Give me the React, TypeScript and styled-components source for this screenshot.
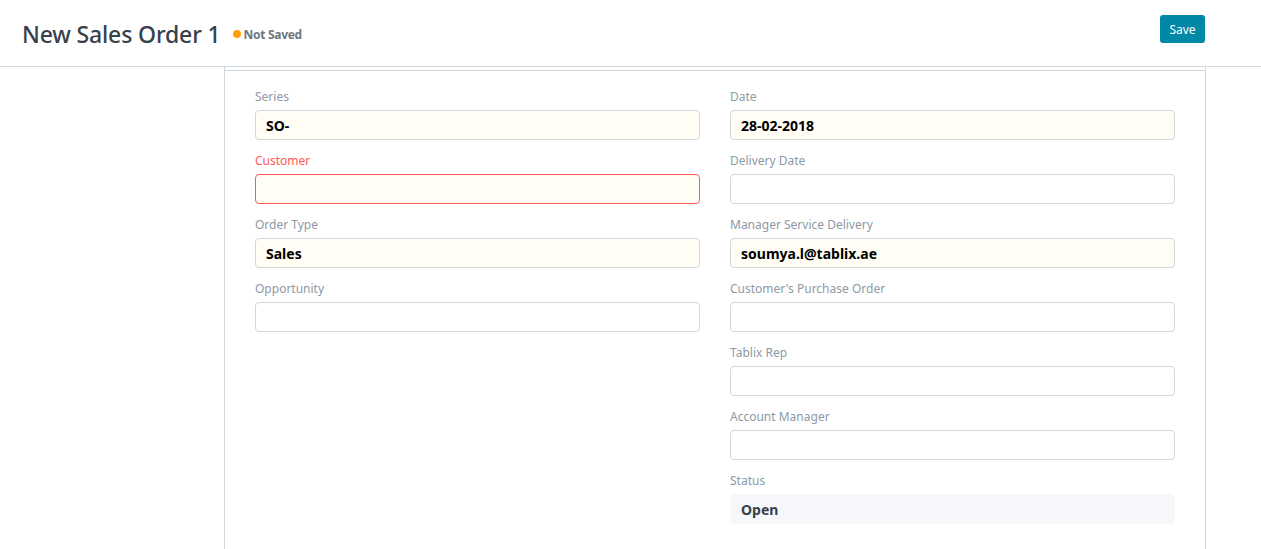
import React from "react";
import styled, { createGlobalStyle } from "styled-components";

const Global = createGlobalStyle`
  html, body { margin: 0; padding: 0; background: #fff; }
  body { font-family: "Noto Sans", "Open Sans", sans-serif; color: #36414c; }
  * { box-sizing: border-box; }
`;

const Page = styled.div`
  width: 1261px;
  height: 549px;
  overflow: hidden;
`;

const Header = styled.header`
  height: 67px;
  border-bottom: 1px solid #d1d8dd;
  display: flex;
  align-items: center;
  padding: 0 56px 0 22px;
`;

const Title = styled.h1`
  margin: 3px 0 0;
  font-size: 23px;
  font-weight: 500;
  color: #36414c;
  line-height: 1;
  letter-spacing: -0.15px;
`;

const Indicator = styled.span`
  display: inline-flex;
  align-items: center;
  margin-left: 12px;
  margin-top: 2px;
  font-size: 12px;
  font-weight: 700;
  letter-spacing: -0.3px;
  color: #6c7680;
  &::before {
    content: "";
    width: 8px;
    height: 8px;
    border-radius: 50%;
    background: #ffa00a;
    margin-right: 3px;
  }
`;

const Spacer = styled.div`
  flex: 1;
`;

const SaveButton = styled.button`
  height: 28px;
  width: 45px;
  padding: 0;
  border: none;
  border-radius: 3px;
  background: #0089a7;
  color: #fff;
  font-family: inherit;
  font-size: 12px;
  margin-top: -8px;
`;

const Card = styled.main`
  margin-left: 224px;
  width: 982px;
  padding-top: 3px;
  border-left: 1px solid #d1d8dd;
  border-right: 1px solid #d1d8dd;
  height: 482px;
`;

const Section = styled.section`
  border-top: 1px solid #d1d8dd;
  padding: 17px 30px 0;
  display: grid;
  grid-template-columns: 445px 445px;
  column-gap: 30px;
  align-items: start;
`;

const Column = styled.div`
  display: flex;
  flex-direction: column;
`;

const Field = styled.div`
  margin-bottom: 12px;
`;

const Label = styled.div<{ $error?: boolean }>`
  font-size: 12px;
  line-height: 18px;
  height: 18px;
  margin-bottom: 4px;
  color: ${(p) => (p.$error ? "#ff5858" : "#8d99a6")};
`;

type Variant = "mandatory" | "plain" | "error" | "readonly";

const Control = styled.div<{ $variant: Variant }>`
  height: 30px;
  border-radius: 4px;
  padding: 0 10px;
  display: flex;
  align-items: center;
  font-size: 14px;
  font-weight: 700;
  color: ${(p) => (p.$variant === "readonly" ? "#36414c" : "#000")};
  background: ${(p) =>
    p.$variant === "readonly"
      ? "#f5f7fa"
      : p.$variant === "plain"
      ? "#fff"
      : "#fffdf4"};
  border: 1px solid
    ${(p) =>
      p.$variant === "error"
        ? "#ff5858"
        : p.$variant === "readonly"
        ? "#f5f7fa"
        : "#d1d8dd"};
`;

type F = { label: string; value?: string; variant: Variant };

const left: F[] = [
  { label: "Series", value: "SO-", variant: "mandatory" },
  { label: "Customer", variant: "error" },
  { label: "Order Type", value: "Sales", variant: "mandatory" },
  { label: "Opportunity", variant: "plain" },
];

const right: F[] = [
  { label: "Date", value: "28-02-2018", variant: "mandatory" },
  { label: "Delivery Date", variant: "plain" },
  { label: "Manager Service Delivery", value: "soumya.l@tablix.ae", variant: "mandatory" },
  { label: "Customer's Purchase Order", variant: "plain" },
  { label: "Tablix Rep", variant: "plain" },
  { label: "Account Manager", variant: "plain" },
  { label: "Status", value: "Open", variant: "readonly" },
];

const FieldView = ({ f }: { f: F }) => (
  <Field>
    <Label $error={f.variant === "error"}>{f.label}</Label>
    <Control $variant={f.variant}>{f.value}</Control>
  </Field>
);

export default function App() {
  return (
    <Page>
      <Global />
      <Header>
        <Title>New Sales Order 1</Title>
        <Indicator>Not Saved</Indicator>
        <Spacer />
        <SaveButton>Save</SaveButton>
      </Header>
      <Card>
        <Section>
          <Column>
            {left.map((f) => (
              <FieldView key={f.label} f={f} />
            ))}
          </Column>
          <Column>
            {right.map((f) => (
              <FieldView key={f.label} f={f} />
            ))}
          </Column>
        </Section>
      </Card>
    </Page>
  );
}
